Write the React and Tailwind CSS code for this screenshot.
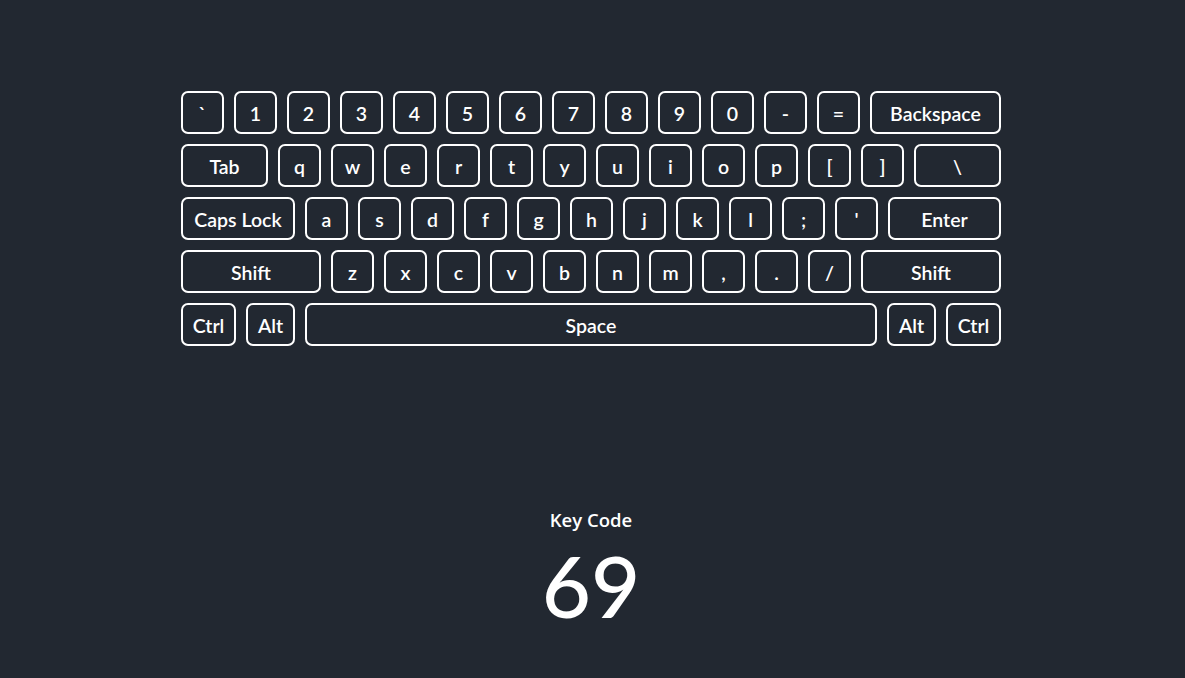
const rows = [
  [['`'], ['1'], ['2'], ['3'], ['4'], ['5'], ['6'], ['7'], ['8'], ['9'], ['0'], ['-'], ['='], ['Backspace', 'w-[131px]']],
  [['Tab', 'w-[87px]'], ['q'], ['w'], ['e'], ['r'], ['t'], ['y'], ['u'], ['i'], ['o'], ['p'], ['['], [']'], ['\\', 'w-[87px]']],
  [['Caps Lock', 'w-[114px]'], ['a'], ['s'], ['d'], ['f'], ['g'], ['h'], ['j'], ['k'], ['l'], [';'], ["'"], ['Enter', 'w-[113px]']],
  [['Shift', 'w-[140px]'], ['z'], ['x'], ['c'], ['v'], ['b'], ['n'], ['m'], [','], ['.'], ['/'], ['Shift', 'w-[140px]']],
  [['Ctrl', 'w-[55px]'], ['Alt', 'w-[49px]'], ['Space', 'w-[572px]'], ['Alt', 'w-[49px]'], ['Ctrl', 'w-[55px]']],
]

function Key({ label, width }) {
  return (
    <div
      className={`${width || 'w-[43px]'} h-[43px] shrink-0 flex items-center justify-center pt-[2px] rounded-[7px] border-2 border-white text-white text-[19.5px] font-semibold`}
    >
      {label}
    </div>
  )
}

export default function App() {
  return (
    <div className="min-h-[678px] bg-[#222831] flex flex-col items-center pr-[3px] font-['Lato','Liberation_Sans',sans-serif]">
      <div className="mt-[91px] flex flex-col gap-[10px]">
        {rows.map((row, i) => (
          <div key={i} className="flex gap-[10px]">
            {row.map(([label, width], j) => (
              <Key key={j} label={label} width={width} />
            ))}
          </div>
        ))}
      </div>

      <div className="mt-[162px] flex flex-col items-center text-white">
        <span className="text-[18.5px] font-semibold font-['Open_Sans',sans-serif] leading-[24px]">Key Code</span>
        <span className="text-[85px] leading-none mt-[11px] font-medium">69</span>
      </div>
    </div>
  )
}
